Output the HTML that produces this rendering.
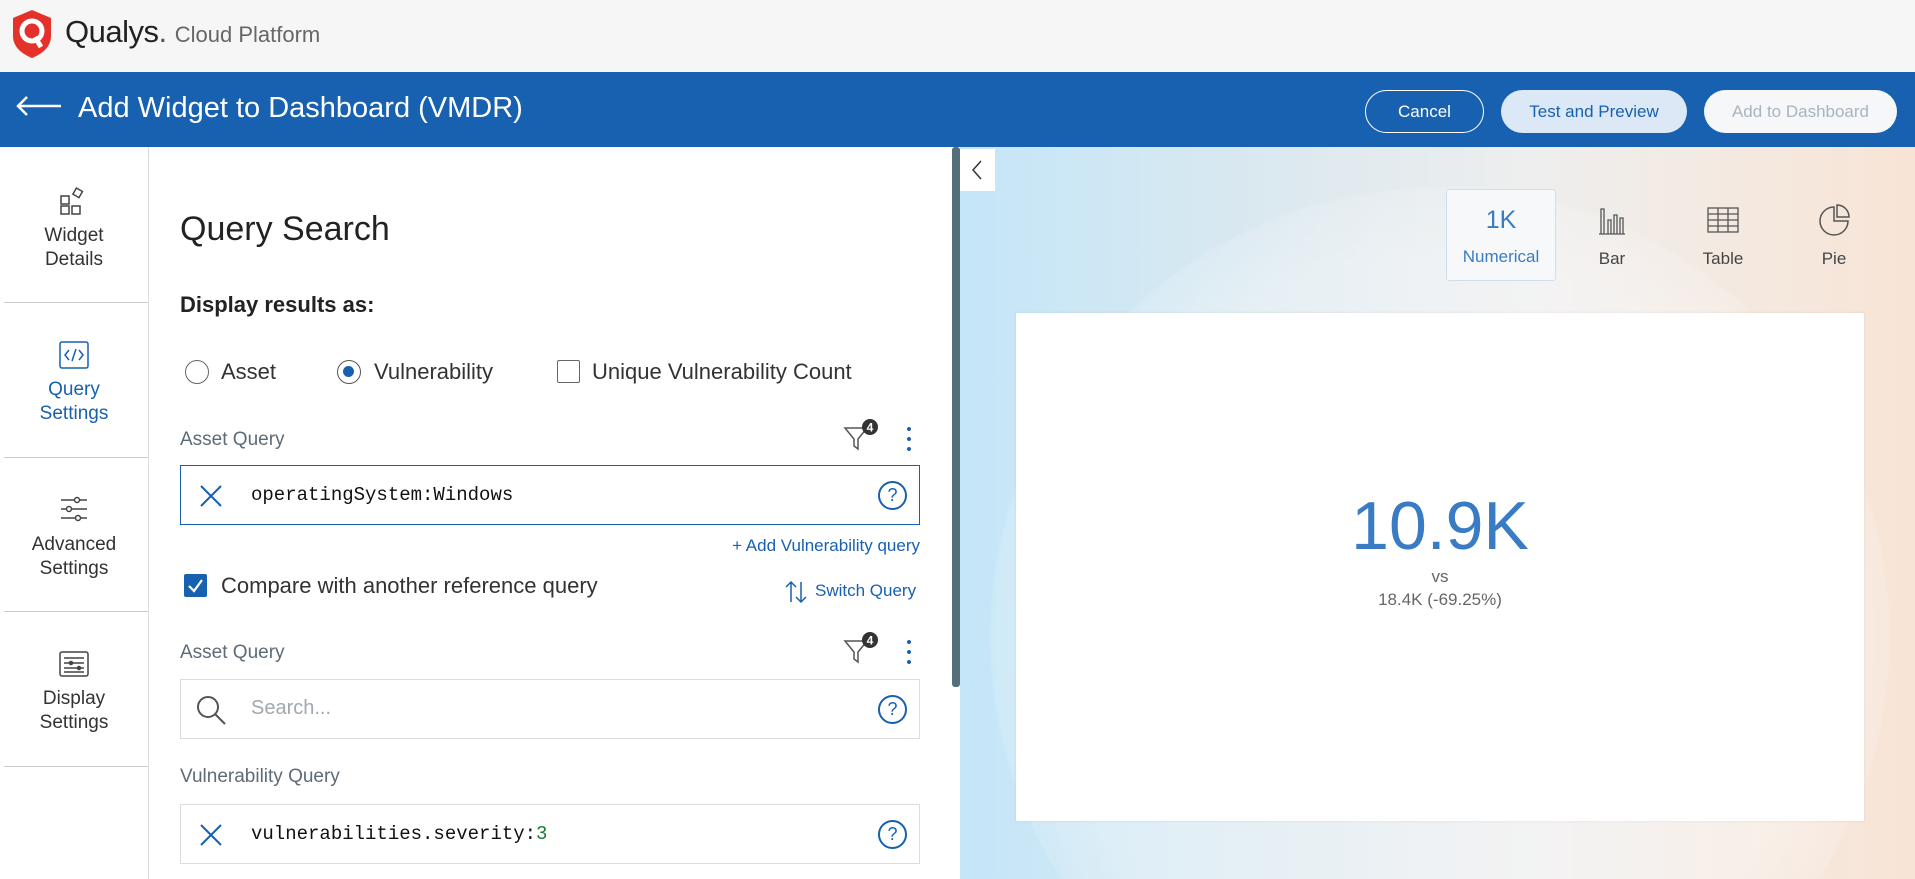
<!DOCTYPE html>
<html><head><meta charset="utf-8"><style>
*{box-sizing:border-box;margin:0;padding:0}
body{width:1915px;height:879px;overflow:hidden;font-family:"Liberation Sans",sans-serif;background:#fff;position:relative;color:#222}
.abs{position:absolute}
.top{left:0;top:0;width:1915px;height:72px;background:#f6f6f6}
.hdr{left:0;top:72px;width:1915px;height:75px;background:#1761b0}
.btn{position:absolute;top:90px;height:43px;border-radius:22px;font-size:17px;display:flex;align-items:center;justify-content:center}
.nav{left:0;top:147px;width:149px;height:732px;border-right:1px solid #ddd;background:#fff}
.navi{position:absolute;left:0;width:148px;text-align:center;font-size:19px;line-height:24px;color:#333}
.sep{position:absolute;left:4px;width:144px;height:1px;background:#ccc}
.lbl{font-size:19px;color:#5d6b78}
.box{position:absolute;left:180px;width:740px;height:60px;border:1px solid #dcdcdc;background:#fff}
.mono{font-family:"Liberation Mono",monospace;font-size:19px;color:#111}
.q{position:absolute;right:12px;top:15px;width:29px;height:29px;border:2px solid #1761b0;border-radius:50%;color:#1761b0;font-size:18px;text-align:center;line-height:25px}
.tab{position:absolute;top:189px;width:110px;height:92px;text-align:center;font-size:17px;color:#444}
</style></head><body>
<div class="abs top"></div>
<svg class="abs" style="left:11px;top:9px" width="42" height="50" viewBox="0 0 42 50"><path d="M21 1 L40 9 V27 C40 38 31 45 21 49 C11 45 2 38 2 27 V9 Z" fill="#e4322b"/><circle cx="21" cy="22" r="10" fill="none" stroke="#fff" stroke-width="5"/><path d="M24 28 L30 38" stroke="#fff" stroke-width="5"/></svg>
<div class="abs" style="left:65px;top:14px;font-size:31px;color:#222;letter-spacing:-0.5px">Qualys<span style="color:#555">.</span> <span style="font-size:22px;color:#666;letter-spacing:0">Cloud Platform</span></div>
<div class="abs hdr"></div>
<svg class="abs" style="left:15px;top:95px" width="48" height="22" viewBox="0 0 48 22"><path d="M46 11 H3 M12 2 L3 11 L12 20" stroke="#fff" stroke-width="2.5" fill="none"/></svg>
<div class="abs" style="left:78px;top:92px;font-size:29px;color:#fff">Add Widget to Dashboard (VMDR)</div>
<div class="btn" style="left:1365px;width:119px;border:1.5px solid #fff;color:#fff">Cancel</div>
<div class="btn" style="left:1501px;width:186px;background:#dce8f5;color:#1761b0">Test and Preview</div>
<div class="btn" style="left:1704px;width:193px;background:#f5f7f9;color:#a9b4bf">Add to Dashboard</div>

<div class="abs nav"></div>
<svg class="abs" style="left:60px;top:186px" width="28" height="30" viewBox="0 0 28 30" fill="none" stroke="#444" stroke-width="1.5"><rect x="1" y="10" width="8" height="8"/><rect x="1" y="20" width="8" height="8"/><rect x="12" y="20" width="8" height="8"/><rect x="14" y="3" width="7" height="7" transform="rotate(30 17 7)"/></svg>
<div class="navi" style="top:224px">Widget<br>Details</div>
<div class="sep" style="top:302px"></div>
<svg class="abs" style="left:59px;top:341px" width="30" height="28" viewBox="0 0 30 28" fill="none" stroke="#1761b0" stroke-width="1.5"><rect x="1" y="1" width="28" height="26" rx="2"/><path d="M10 9 L6 14 L10 19 M20 9 L24 14 L20 19 M17 8 L13 20"/></svg>
<div class="navi" style="top:378px;color:#1761b0">Query<br>Settings</div>
<div class="sep" style="top:457px"></div>
<svg class="abs" style="left:60px;top:496px" width="28" height="26" viewBox="0 0 28 26" stroke="#444" stroke-width="1.5" fill="#fff"><path d="M1 4 H27 M1 13 H27 M1 22 H27"/><circle cx="17" cy="4" r="2.5"/><circle cx="9" cy="13" r="2.5"/><circle cx="18" cy="22" r="2.5"/></svg>
<div class="navi" style="top:533px">Advanced<br>Settings</div>
<div class="sep" style="top:611px"></div>
<svg class="abs" style="left:59px;top:651px" width="30" height="26" viewBox="0 0 30 26" stroke="#444" stroke-width="1.5" fill="none"><rect x="1" y="1" width="28" height="24" rx="2"/><path d="M5 7 H25 M5 12 H25 M5 17 H25 M5 21 H25"/><circle cx="12" cy="12" r="1.5" fill="#444"/><circle cx="20" cy="17" r="1.5" fill="#444"/></svg>
<div class="navi" style="top:687px">Display<br>Settings</div>
<div class="sep" style="top:766px"></div>

<div class="abs" style="left:180px;top:210px;font-size:34px;color:#222">Query Search</div>
<div class="abs" style="left:180px;top:292px;font-size:22px;font-weight:bold;color:#222">Display results as:</div>
<div class="abs" style="left:185px;top:360px;width:24px;height:24px;border:1.5px solid #666;border-radius:50%"></div>
<div class="abs" style="left:221px;top:359px;font-size:22px;color:#333">Asset</div>
<div class="abs" style="left:337px;top:360px;width:24px;height:24px;border:1.5px solid #555;border-radius:50%"><div style="margin:5px;width:11px;height:11px;border-radius:50%;background:#1761b0"></div></div>
<div class="abs" style="left:374px;top:359px;font-size:22px;color:#333">Vulnerability</div>
<div class="abs" style="left:557px;top:360px;width:23px;height:23px;border:1.5px solid #666;border-radius:2px"></div>
<div class="abs" style="left:592px;top:359px;font-size:22px;color:#333">Unique Vulnerability Count</div>

<div class="abs lbl" style="left:180px;top:429px">Asset Query</div>
<svg class="abs" style="left:843px;top:418px" width="36" height="36" viewBox="0 0 36 36"><path d="M2 10 H24 L15 21 V31 L11 28 V21 Z" fill="none" stroke="#555" stroke-width="1.5"/><circle cx="27" cy="9" r="8" fill="#333"/><text x="27" y="13.5" font-size="12" font-weight="bold" fill="#fff" text-anchor="middle" font-family="Liberation Sans">4</text></svg>
<div class="abs" style="left:907px;top:424px;width:4px;height:28px;background:radial-gradient(circle,#1761b0 1.8px,transparent 2.2px) 0 0/4px 10px repeat-y"></div>
<div class="box" style="top:465px;border-color:#1761b0"><svg class="abs" style="left:18px;top:18px" width="24" height="24" viewBox="0 0 24 24"><path d="M2 2 L22 22 M22 2 L2 22" stroke="#1761b0" stroke-width="2"/></svg><div class="abs mono" style="left:70px;top:18px">operatingSystem:Windows</div><div class="q">?</div></div>
<div class="abs" style="left:700px;top:536px;width:220px;text-align:right;font-size:17px;color:#1761b0">+ Add Vulnerability query</div>
<div class="abs" style="left:184px;top:574px;width:23px;height:23px;background:#1761b0;border-radius:2px"><svg width="23" height="23" viewBox="0 0 23 23"><path d="M5 12 L10 17 L18 6" stroke="#fff" stroke-width="2.2" fill="none"/></svg></div>
<div class="abs" style="left:221px;top:573px;font-size:22px;color:#333">Compare with another reference query</div>
<svg class="abs" style="left:784px;top:580px" width="24" height="24" viewBox="0 0 24 24" stroke="#1761b0" stroke-width="1.5" fill="none"><path d="M7 22 V2 M2 7 L7 2 L12 7 M17 2 V22 M12 17 L17 22 L22 17"/></svg>
<div class="abs" style="left:815px;top:581px;font-size:17px;color:#1761b0">Switch Query</div>

<div class="abs lbl" style="left:180px;top:642px">Asset Query</div>
<svg class="abs" style="left:843px;top:631px" width="36" height="36" viewBox="0 0 36 36"><path d="M2 10 H24 L15 21 V31 L11 28 V21 Z" fill="none" stroke="#555" stroke-width="1.5"/><circle cx="27" cy="9" r="8" fill="#333"/><text x="27" y="13.5" font-size="12" font-weight="bold" fill="#fff" text-anchor="middle" font-family="Liberation Sans">4</text></svg>
<div class="abs" style="left:907px;top:637px;width:4px;height:28px;background:radial-gradient(circle,#1761b0 1.8px,transparent 2.2px) 0 0/4px 10px repeat-y"></div>
<div class="box" style="top:679px"><svg class="abs" style="left:14px;top:14px" width="32" height="32" viewBox="0 0 32 32" fill="none" stroke="#555" stroke-width="2"><circle cx="13" cy="13" r="10"/><path d="M20 20 L30 30"/></svg><div class="abs" style="left:70px;top:17px;font-size:20px;color:#a0a8b0">Search...</div><div class="q">?</div></div>
<div class="abs lbl" style="left:180px;top:766px">Vulnerability Query</div>
<div class="box" style="top:804px"><svg class="abs" style="left:18px;top:18px" width="24" height="24" viewBox="0 0 24 24"><path d="M2 2 L22 22 M22 2 L2 22" stroke="#1761b0" stroke-width="2"/></svg><div class="abs mono" style="left:70px;top:18px">vulnerabilities.severity:<span style="color:#1a7a3a">3</span></div><div class="q">?</div></div>

<div class="abs" style="left:952px;top:147px;width:8px;height:540px;background:#546e7a;border-radius:3px"></div>
<div class="abs" style="left:960px;top:147px;width:955px;height:732px;overflow:hidden;background:linear-gradient(90deg,#c4e6f8 0%,#dde9ef 35%,#eeeeee 60%,#f5e8de 85%,#f8e4d6 100%)"><div style="position:absolute;left:30px;top:40px;width:900px;height:900px;border-radius:50%;background:radial-gradient(circle,rgba(255,255,255,0.3) 60%,rgba(255,255,255,0.15) 70%,rgba(255,255,255,0) 72%)"></div></div>
<div class="abs" style="left:960px;top:149px;width:35px;height:42px;background:#fff"><svg width="35" height="42" viewBox="0 0 35 42"><path d="M21 12 L13 21 L21 30" stroke="#333" stroke-width="1.5" fill="none"/></svg></div>
<div class="tab" style="left:1446px;background:#f7f8f9;border:1px solid #cfdeee;border-radius:3px;color:#3a7cc4"><div style="font-size:25px;margin-top:16px">1K</div><div style="margin-top:12px">Numerical</div></div>
<div class="tab" style="left:1557px"><svg style="margin-top:17px" width="30" height="30" viewBox="0 0 30 30" fill="none" stroke="#555" stroke-width="1.3"><path d="M2 28 H28 M4 28 V3 H7 V28 M11 28 V14 H14 V28 M17 28 V9 H20 V28 M23 28 V12 H26 V28"/></svg><div style="margin-top:8px">Bar</div></div>
<div class="tab" style="left:1668px"><svg style="margin-top:17px" width="32" height="28" viewBox="0 0 32 28" fill="none" stroke="#555" stroke-width="1.3"><rect x="1" y="2" width="30" height="24"/><path d="M1 8 H31 M1 14 H31 M1 20 H31 M11 2 V26 M21 2 V26"/></svg><div style="margin-top:10px">Table</div></div>
<div class="tab" style="left:1779px"><svg style="margin-top:15px" width="32" height="32" viewBox="0 0 32 32" fill="none" stroke="#555" stroke-width="1.5"><path d="M16 3 A14 14 0 1 0 30 17 H16 Z"/><path d="M19 1 A12 12 0 0 1 31 13 H19 Z"/></svg><div style="margin-top:8px">Pie</div></div>
<div class="abs" style="left:1016px;top:313px;width:848px;height:508px;background:#fff;box-shadow:0 0 3px rgba(0,0,0,0.08)"></div>
<div class="abs" style="left:1016px;top:488px;width:848px;text-align:center;font-size:68px;color:#3a7cc4;line-height:76px">10.9K</div>
<div class="abs" style="left:1016px;top:567px;width:848px;text-align:center;font-size:17px;color:#666">vs</div>
<div class="abs" style="left:1016px;top:590px;width:848px;text-align:center;font-size:17px;color:#666">18.4K (-69.25%)</div>
</body></html>
